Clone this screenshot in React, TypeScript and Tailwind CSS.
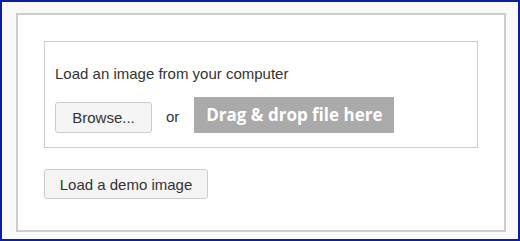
export default function App() {
  return (
    <div className="h-[241px] w-[520px] border-2 border-[#0b1fa0] bg-[#f9f9f9] pl-[14px] pt-[11px] font-['Liberation_Sans',Arial,sans-serif] text-[15px] text-[#333]">
      <div className="h-[219px] w-[490px] border-2 border-[#cccccc] bg-white p-[26px]">
        <div className="border border-[#cccccc] px-[10px] pb-[14px] pt-[23px]">
          <p className="leading-[17px]">Load an image from your computer</p>
          <div className="mt-[15px] flex items-end">
            <button className="h-[31px] w-[97px] rounded-[3px] border border-[#cccccc] bg-[#f5f5f5] leading-[17px] text-[#333]">
              Browse...
            </button>
            <span className="ml-[14px] pb-[8px] leading-[17px]">or</span>
            <div className="ml-[15px] flex h-[36px] w-[200px] items-center justify-center bg-[#aaaaaa] font-['Open_Sans',sans-serif] text-[17px] font-bold text-white">
              Drag &amp; drop file here
            </div>
          </div>
        </div>
        <button className="mt-[21px] h-[30px] w-[164px] rounded-[3px] border border-[#cccccc] bg-[#f5f5f5] leading-[17px] text-[#333]">
          Load a demo image
        </button>
      </div>
    </div>
  );
}
